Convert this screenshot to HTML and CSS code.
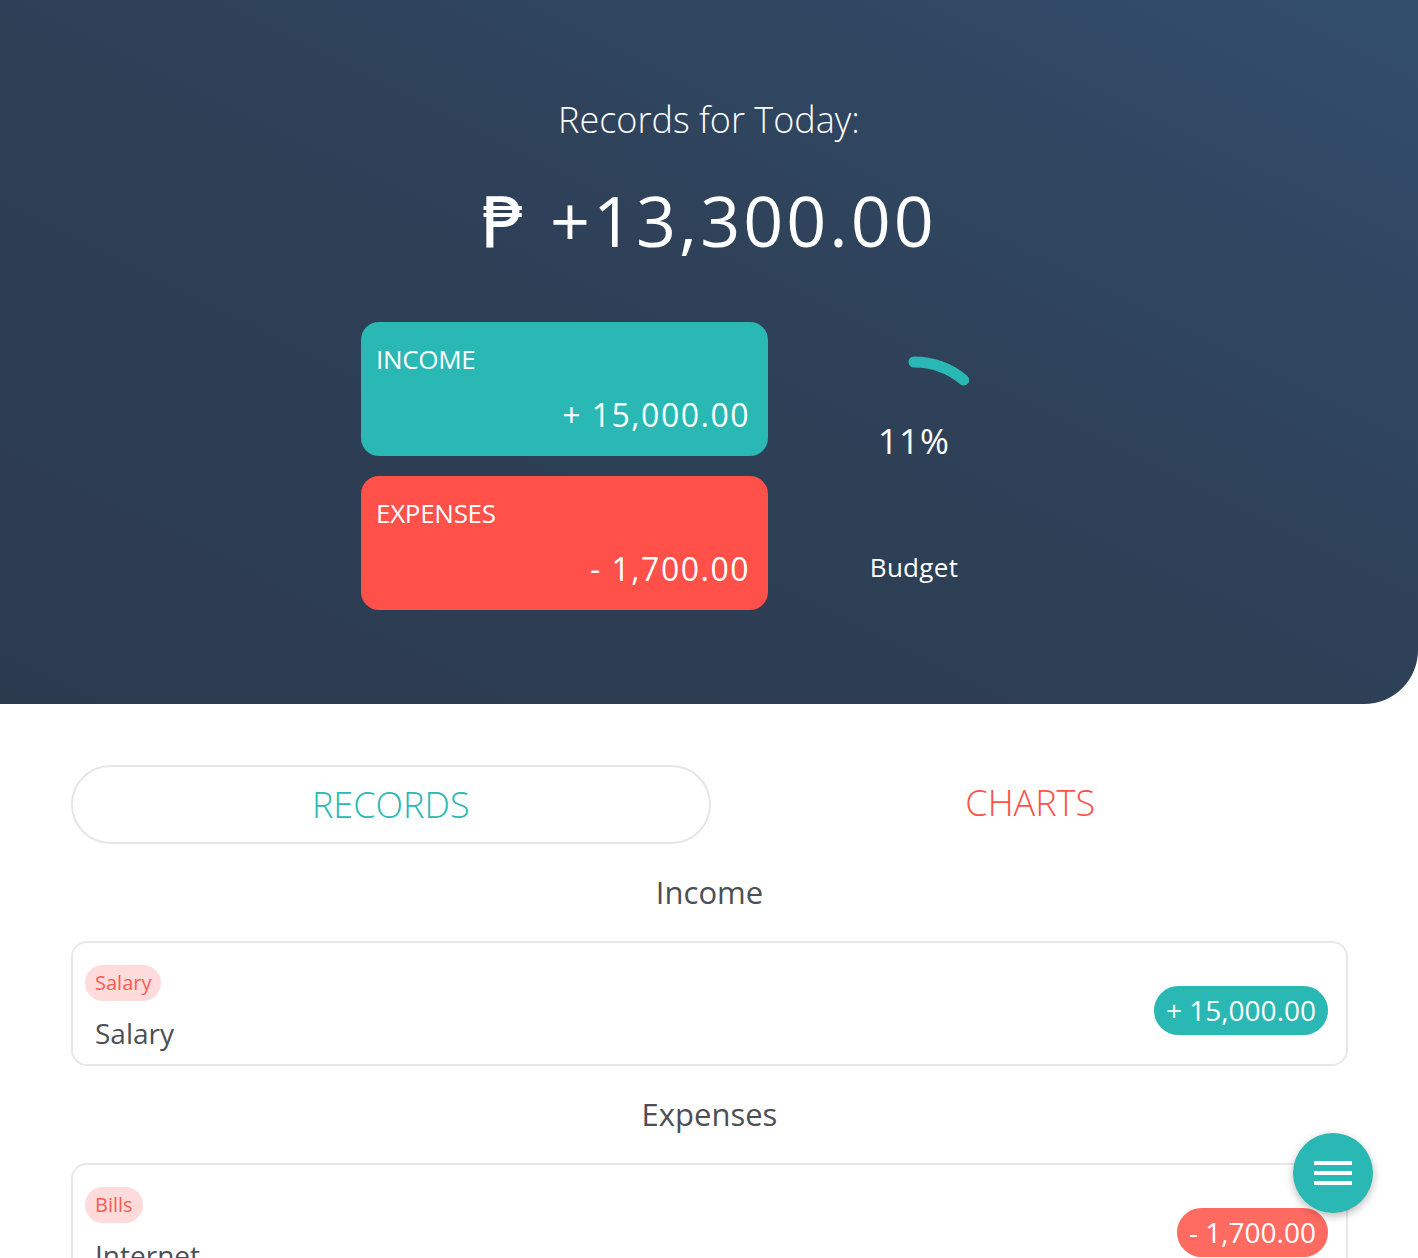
FILE: index.html
```html
<!DOCTYPE html>
<html lang="en">
<head>
<meta charset="utf-8">
<title>Records for Today</title>
<link rel="stylesheet" href="styles.css">
</head>
<body>
<header class="hero">
  <h1 class="hero-title">Records for Today:</h1>
  <div class="hero-total">₱ +13,300.00</div>
  <div class="summary">
    <div class="summary-cards">
      <div class="sum-card sum-income">
        <div class="sum-label">INCOME</div>
        <div class="sum-amount">+ 15,000.00</div>
      </div>
      <div class="sum-card sum-expense">
        <div class="sum-label">EXPENSES</div>
        <div class="sum-amount">- 1,700.00</div>
      </div>
    </div>
    <div class="budget">
      <div class="gauge">
        <svg width="170" height="170" viewBox="0 0 170 170">
          <path d="M85 7 A78 78 0 0 1 134.7 24.9" fill="none" stroke="#29b8b3" stroke-width="11" stroke-linecap="round"/>
        </svg>
        <div class="gauge-value">11%</div>
      </div>
      <div class="budget-label">Budget</div>
    </div>
  </div>
</header>

<main class="content">
  <div class="tabs">
    <div class="tab tab-active">RECORDS</div>
    <div class="tab tab-charts">CHARTS</div>
  </div>

  <h2 class="section-title">Income</h2>
  <div class="record">
    <div class="record-info">
      <span class="tag">Salary</span>
      <div class="record-name">Salary</div>
    </div>
    <div class="pill pill-income">+ 15,000.00</div>
  </div>

  <h2 class="section-title">Expenses</h2>
  <div class="record">
    <div class="record-info">
      <span class="tag">Bills</span>
      <div class="record-name">Internet</div>
    </div>
    <div class="pill pill-expense">- 1,700.00</div>
  </div>
</main>

<button class="fab" aria-label="Menu">
  <span class="fab-line"></span>
  <span class="fab-line"></span>
  <span class="fab-line"></span>
</button>
</body>
</html>
```

FILE: styles.css
```css
html, body {
  margin: 0;
  padding: 0;
}
::-webkit-scrollbar {
  width: 0;
  height: 0;
}
body {
  font-family: "Open Sans", "DejaVu Sans", sans-serif;
  background: #ffffff;
  color: #4b4f56;
}

.hero {
  background: linear-gradient(to bottom left, #324d6c 0%, #2e4158 45%, #2c3a4e 100%);
  border-bottom-right-radius: 54px;
  padding: 95px 0 94px;
  color: #ffffff;
  text-align: center;
}
.hero-title {
  margin: 0;
  font-size: 36px;
  font-weight: 300;
  line-height: 50px;
}
.hero-total {
  margin-top: 35px;
  font-size: 70px;
  font-weight: 400;
  line-height: 80px;
  letter-spacing: 3px;
}
.summary {
  display: flex;
  justify-content: center;
  margin-top: 62px;
}
.summary-cards {
  width: 407px;
  display: flex;
  flex-direction: column;
  gap: 20px;
}
.sum-card {
  height: 134px;
  border-radius: 18px;
  box-sizing: border-box;
  padding: 19px 18px 0 15px;
  text-align: left;
}
.sum-income { background: #29b8b3; }
.sum-expense { background: #ff5049; }
.sum-label {
  font-size: 26px;
  line-height: 36px;
  letter-spacing: -0.3px;
}
.sum-amount {
  margin-top: 18px;
  text-align: right;
  font-size: 32px;
  line-height: 40px;
  letter-spacing: 1.5px;
}
.budget {
  width: 289px;
  display: flex;
  flex-direction: column;
  align-items: center;
  padding-top: 33px;
  padding-left: 3px;
  box-sizing: border-box;
}
.gauge {
  position: relative;
  width: 170px;
  height: 170px;
}
.gauge svg {
  display: block;
}
.gauge-value {
  position: absolute;
  left: 0;
  right: 0;
  top: 64px;
  text-align: center;
  font-size: 35px;
  line-height: 44px;
  letter-spacing: 1px;
}
.budget-label {
  margin-top: 24px;
  font-size: 26px;
  line-height: 36px;
  letter-spacing: 0.3px;
}

.content {
  padding: 61px 70px 0 71px;
}
.tabs {
  display: flex;
  gap: 2px;
}
.tab {
  flex: 1;
  height: 79px;
  box-sizing: border-box;
  display: flex;
  align-items: center;
  justify-content: center;
  font-size: 36px;
  font-weight: 300;
}
.tab-active {
  border: 2px solid #e6e6e6;
  border-radius: 40px;
  color: #29b8b3;
}
.tab-charts {
  color: #ff5049;
  padding-bottom: 4px;
}
.section-title {
  margin: 26px 0 27px;
  text-align: center;
  font-size: 31px;
  font-weight: 400;
  line-height: 44px;
  color: #4d4f54;
}
.record {
  border: 2px solid #e8e8e8;
  border-radius: 16px;
  height: 125px;
  box-sizing: border-box;
  display: flex;
  justify-content: space-between;
  align-items: flex-start;
  padding: 22px 18px 0 12px;
}
.record-info {
  display: flex;
  flex-direction: column;
  align-items: flex-start;
}
.tag {
  display: inline-block;
  height: 36px;
  line-height: 36px;
  padding: 0 10px;
  border-radius: 18px;
  background: #ffdcdb;
  color: #ff5a52;
  font-size: 20px;
}
.record-name {
  margin-top: 12px;
  margin-left: 10px;
  font-size: 28px;
  line-height: 40px;
  color: #4b4f56;
}
.pill {
  margin-top: 21px;
  height: 49px;
  line-height: 49px;
  padding: 0 12px;
  border-radius: 25px;
  color: #ffffff;
  font-size: 28px;
}
.pill-income { background: #29b8b3; }
.pill-expense { background: #ff6a61; }

.fab {
  position: fixed;
  right: 45px;
  bottom: 45px;
  width: 80px;
  height: 80px;
  border-radius: 50%;
  border: none;
  background: #29b8b3;
  box-shadow: 0 3px 8px rgba(0, 0, 0, 0.28);
  display: flex;
  flex-direction: column;
  align-items: center;
  justify-content: center;
  gap: 6px;
  padding: 0;
}
.fab-line {
  display: block;
  width: 38px;
  height: 4px;
  background: #ffffff;
}
```
